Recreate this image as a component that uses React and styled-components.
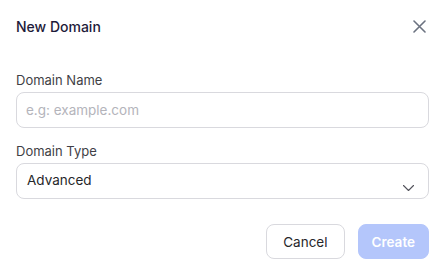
import React from 'react'
import styled, { createGlobalStyle } from 'styled-components'

const GlobalStyle = createGlobalStyle`
  * { box-sizing: border-box; }
  body {
    margin: 0;
    background: #ffffff;
    font-family: Inter, "Noto Sans", sans-serif;
  }
`

const Modal = styled.div`
  width: 443px;
  height: 267px;
  background: #ffffff;
  padding: 0 14px 0 16px;
  display: flex;
  flex-direction: column;
`

const Header = styled.div`
  height: 54px;
  display: flex;
  align-items: center;
  justify-content: space-between;
  padding-bottom: 1px;
`

const Title = styled.h2`
  margin: 0;
  font-size: 14px;
  font-weight: 500;
  line-height: 20px;
  color: #1d1b3a;
`

const CloseButton = styled.button`
  border: 0;
  background: none;
  padding: 0;
  margin-right: 3px;
  width: 13px;
  height: 13px;
  display: flex;
  cursor: pointer;
  color: #6b7280;
`

const Field = styled.div`
  display: flex;
  flex-direction: column;
  margin-top: ${p => p.$top}px;
`

const Label = styled.label`
  font-size: 13px;
  line-height: 16px;
  color: #3f3f46;
  margin-bottom: 4px;
`

const Input = styled.input`
  height: 36px;
  width: 100%;
  border: 1px solid #d9d9de;
  border-radius: 8px;
  padding: 0 9px;
  font-family: inherit;
  font-size: 13.5px;
  color: #27272a;
  outline: none;
  &::placeholder { color: #b4b4bb; }
`

const SelectBox = styled.div`
  position: relative;
  height: 36px;
  border: 1px solid #d9d9de;
  border-radius: 8px;
  padding: 0 10px 2px;
  display: flex;
  align-items: center;
  font-size: 13.5px;
  color: #27272a;
`

const Chevron = styled.svg`
  position: absolute;
  right: 14px;
  top: 21px;
  width: 11px;
  height: 6px;
  color: #52525b;
`

const Footer = styled.div`
  margin-top: 25px;
  display: flex;
  justify-content: flex-end;
  gap: 13px;
`

const Button = styled.button`
  height: 35px;
  padding: 0 ${p => (p.$primary ? 13 : 16)}px;
  border-radius: 8px;
  font-family: inherit;
  font-size: 13.5px;
  font-weight: ${p => (p.$primary ? 600 : 400)};
  border: 1px solid ${p => (p.$primary ? '#b4c6fb' : '#d9d9de')};
  background: ${p => (p.$primary ? '#b4c6fb' : '#ffffff')};
  color: ${p => (p.$primary ? '#ffffff' : '#27272a')};
  cursor: ${p => (p.$primary ? 'not-allowed' : 'pointer')};
`

export default function App() {
  return (
    <>
      <GlobalStyle />
      <Modal>
        <Header>
          <Title>New Domain</Title>
          <CloseButton aria-label="Close">
            <svg viewBox="0 0 13 13" width="13" height="13" fill="none" stroke="currentColor" strokeWidth="1.6" strokeLinecap="round">
              <path d="M1 1l11 11M12 1L1 12" />
            </svg>
          </CloseButton>
        </Header>
        <Field $top={18}>
          <Label>Domain Name</Label>
          <Input placeholder="e.g: example.com" />
        </Field>
        <Field $top={15}>
          <Label>Domain Type</Label>
          <SelectBox>
            Advanced
            <Chevron viewBox="0 0 11 6" fill="none" stroke="currentColor" strokeWidth="1.1" strokeLinecap="round" strokeLinejoin="round">
              <path d="M0.5 0.5l5 5 5-5" />
            </Chevron>
          </SelectBox>
        </Field>
        <Footer>
          <Button>Cancel</Button>
          <Button $primary disabled>Create</Button>
        </Footer>
      </Modal>
    </>
  )
}
